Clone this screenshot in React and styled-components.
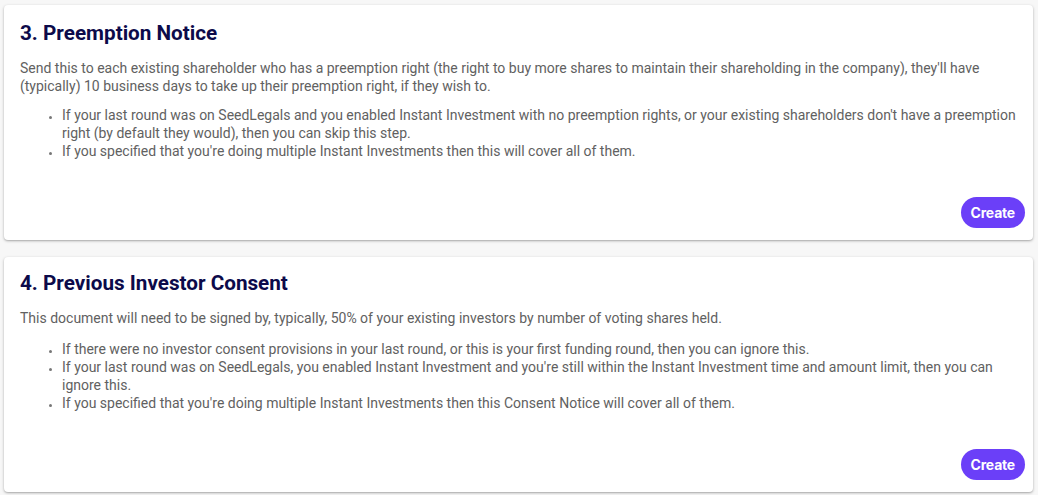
import React from "react";
import styled, { createGlobalStyle } from "styled-components";

const Global = createGlobalStyle`
  html, body { margin: 0; padding: 0; background: #f7f7f7; }
  body { font-family: Roboto, "Liberation Sans", Arial, sans-serif; }
`;

const Page = styled.div`
  display: flex;
  flex-direction: column;
  gap: 17px;
  padding: 5px 5px 4px 4px;
`;

const Card = styled.section`
  background: #fff;
  border-radius: 4px;
  box-shadow: 0 1px 3px rgba(0, 0, 0, 0.28), 0 1px 1px rgba(0, 0, 0, 0.08);
  padding: ${(p) => p.$pt}px 8px 12px 16px;
  display: flex;
  flex-direction: column;
`;

const Title = styled.h3`
  margin: 0;
  font-size: 20.7px;
  line-height: 24px;
  font-weight: 700;
  color: #0c0a4a;
`;

const Text = styled.p`
  margin: 14px 0 0 0;
  font-size: 14px;
  line-height: 18px;
  color: #616161;
`;

const List = styled.ul`
  margin: ${(p) => p.$top}px 0 0 0;
  padding-left: 42px;
  font-size: 14px;
  line-height: 18px;
  color: #616161;
  li::marker { color: #777; font-size: 11px; }
`;

const Footer = styled.div`
  display: flex;
  justify-content: flex-end;
  margin-top: 37px;
`;

const Button = styled.button`
  border: none;
  background: #6b3ff8;
  color: #fff;
  font-family: Inter, Roboto, sans-serif;
  font-weight: 700;
  font-size: 14px;
  height: 31px;
  padding: 0 10px;
  border-radius: 16px;
  cursor: pointer;
  letter-spacing: -0.2px;
`;

const cards = [
  {
    title: "3. Preemption Notice",
    text: "Send this to each existing shareholder who has a preemption right (the right to buy more shares to maintain their shareholding in the company), they'll have (typically) 10 business days to take up their preemption right, if they wish to.",
    pt: 16,
    top: 11,
    items: [
      "If your last round was on SeedLegals and you enabled Instant Investment with no preemption rights, or your existing shareholders don't have a preemption right (by default they would), then you can skip this step.",
      "If you specified that you're doing multiple Instant Investments then this will cover all of them.",
    ],
  },
  {
    title: "4. Previous Investor Consent",
    text: "This document will need to be signed by, typically, 50% of your existing investors by number of voting shares held.",
    pt: 14,
    top: 13,
    items: [
      "If there were no investor consent provisions in your last round, or this is your first funding round, then you can ignore this.",
      "If your last round was on SeedLegals, you enabled Instant Investment and you're still within the Instant Investment time and amount limit, then you can ignore this.",
      "If you specified that you're doing multiple Instant Investments then this Consent Notice will cover all of them.",
    ],
  },
];

export default function App() {
  return (
    <>
      <Global />
      <Page>
        {cards.map((c) => (
          <Card key={c.title} $pt={c.pt}>
            <Title>{c.title}</Title>
            <Text>{c.text}</Text>
            <List $top={c.top}>
              {c.items.map((i) => (
                <li key={i}>{i}</li>
              ))}
            </List>
            <Footer>
              <Button>Create</Button>
            </Footer>
          </Card>
        ))}
      </Page>
    </>
  );
}
